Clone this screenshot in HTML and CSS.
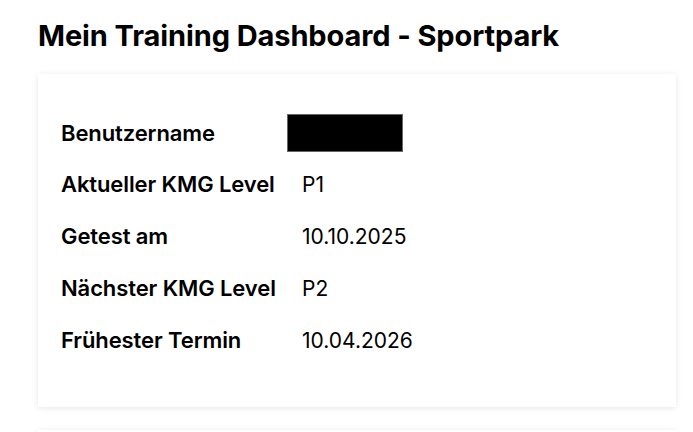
FILE: index.html
```html
<!DOCTYPE html>
<html lang="de">
<head>
<meta charset="utf-8">
<title>Mein Training Dashboard - Sportpark</title>
<link rel="stylesheet" href="styles.css">
</head>
<body>
<main class="page">
  <h1 class="title">Mein Training Dashboard - Sportpark</h1>
  <section class="card">
    <table class="info">
      <tr class="row row-first">
        <th class="label">Benutzername</th>
        <td class="value"><span class="redacted"></span></td>
      </tr>
      <tr class="row">
        <th class="label">Aktueller KMG Level</th>
        <td class="value">P1</td>
      </tr>
      <tr class="row">
        <th class="label">Getest am</th>
        <td class="value">10.10.2025</td>
      </tr>
      <tr class="row">
        <th class="label">Nächster KMG Level</th>
        <td class="value">P2</td>
      </tr>
      <tr class="row">
        <th class="label">Frühester Termin</th>
        <td class="value">10.04.2026</td>
      </tr>
    </table>
  </section>
  <section class="card card-next"></section>
</main>
</body>
</html>
```

FILE: styles.css
```css
html, body {
  margin: 0;
  padding: 0;
  background: #ffffff;
}

body {
  font-family: Inter, "Noto Sans", sans-serif;
  color: #000;
  overflow: hidden;
  height: 432px;
}

.page {
  padding: 20px 17px 0 38px;
}

.title {
  margin: 0 0 22px 0;
  font-size: 29px;
  line-height: 32px;
  font-weight: 700;
  letter-spacing: -0.1px;
}

.card {
  background: #fff;
  box-shadow: 0 1px 6px rgba(0, 0, 0, 0.10);
  padding: 34px 23px 0 23px;
  height: 333px;
  box-sizing: border-box;
}

.card-next {
  margin-top: 23px;
  height: 10px;
  padding: 0;
}

.info {
  border-collapse: collapse;
}

.row {
  height: 52px;
}

.row-first {
  height: 50px;
}

.label {
  width: 241px;
  text-align: left;
  font-weight: 600;
  font-size: 22px;
  padding: 0;
  white-space: nowrap;
  letter-spacing: -0.1px;
}

.value {
  font-size: 21px;
  font-weight: 400;
  padding: 0;
}

.redacted {
  display: block;
  width: 116px;
  height: 38px;
  background: #000;
  margin-left: -15px;
  border: 1px solid #666;
  box-sizing: border-box;
}
```
